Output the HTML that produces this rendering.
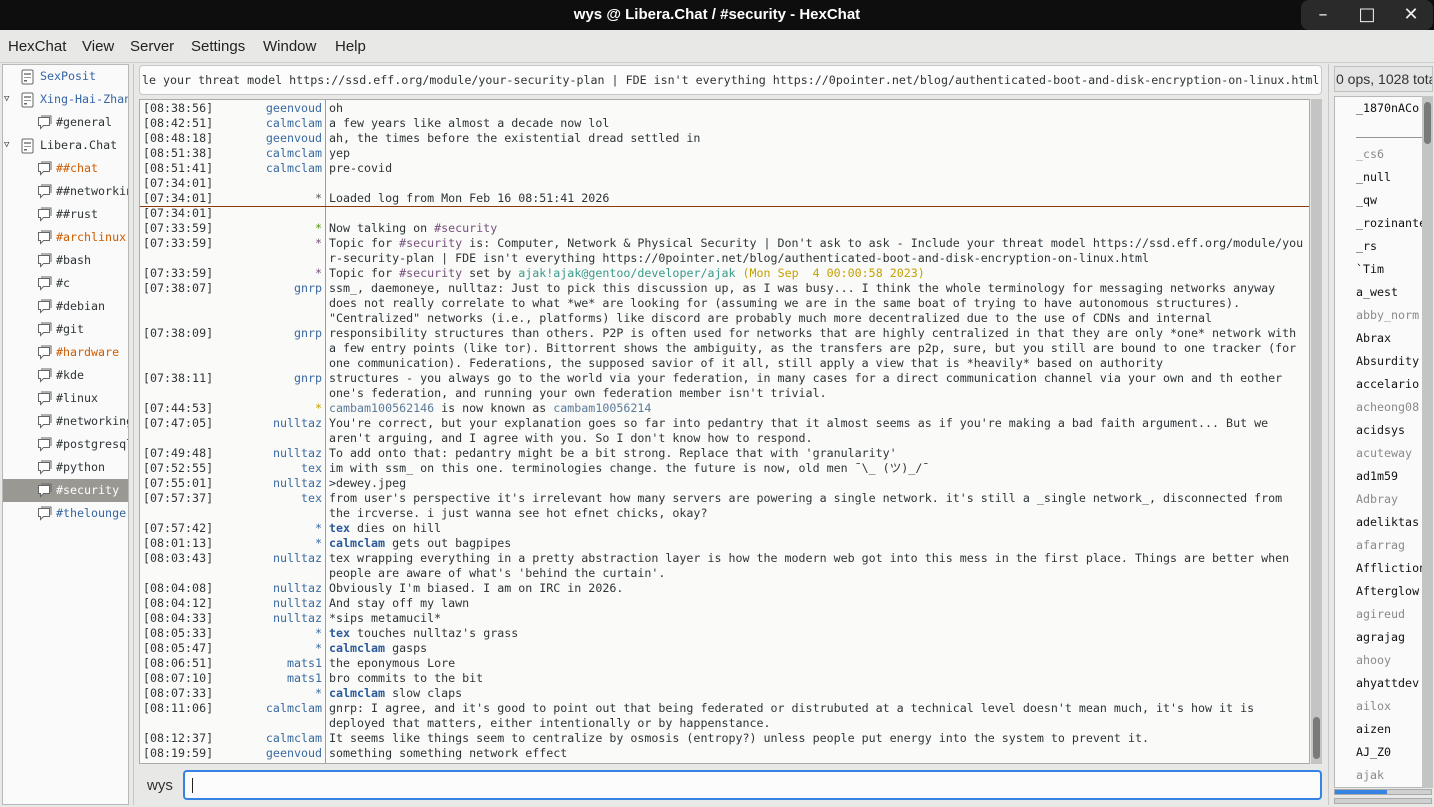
<!DOCTYPE html>
<html><head><meta charset="utf-8"><style>
*{box-sizing:border-box;margin:0;padding:0}
body{width:1434px;height:807px;overflow:hidden;background:#e8e8e7;position:relative;font-family:"DejaVu Sans Mono","Liberation Mono",monospace;font-size:11.65px;color:#2e3436}
.abs{position:absolute}
#title{left:0;top:0;width:1434px;height:30px;background:#0e0e0e;color:#fff;font:bold 15px "Liberation Sans",sans-serif;text-align:center;line-height:30px}
.wb{top:0;width:44px;height:30px;background:#2a2a2a;color:#eee;text-align:center;line-height:30px;font-family:"DejaVu Sans",sans-serif;font-size:18px}
#menu{left:0;top:30px;width:1434px;height:32px;font:15px "Liberation Sans",sans-serif;color:#222}
#menu span{position:absolute;top:8px}
#tree{left:2px;top:64px;width:127px;height:741px;background:#fafafa;border:1px solid #b8b8b8;overflow:hidden}
.ti{position:absolute;height:23px;line-height:23px;white-space:nowrap}
.ti svg{position:absolute;top:4px}
#topic{left:139px;top:65px;width:1183px;height:30px;background:#fcfcfc;border:1px solid #c8c8c8;border-radius:4px;overflow:hidden;white-space:nowrap;line-height:28px;padding-left:2px}
#chat{left:139px;top:99px;width:1171px;height:665px;background:#fafaf9;border:1px solid #aaa;overflow:hidden}
#sep{left:185px;top:0;width:1px;height:665px;background:#9a9aa8}
#marker{left:0;top:106px;width:1171px;height:1px;background:#8b3a0e}
.r{position:absolute;left:0;height:15px;line-height:15px;white-space:pre;width:1171px;margin-top:1px}
.t{position:absolute;left:3px}
.n{position:absolute;right:989px;color:#3a6aa0;text-align:right}
.m{position:absolute;left:189px}
.g{color:#4e9a06}.p{color:#75507b}.y{color:#c4a000}.c{color:#3a9a8a}.b{color:#2a5a9a;font-weight:bold}.s{color:#5a7a9a}
#vs{left:1311px;top:99px;width:11px;height:665px;background:#c4c4c4}
#nl{left:1334px;top:96px;width:89px;height:692px;background:#fafafa;border:1px solid #b8b8b8;overflow:hidden}
.nk{position:absolute;left:21px;height:23px;line-height:23px;white-space:nowrap;color:#111}
.aw{color:#8a8a8a}
</style></head><body>
<div id="title" class="abs">wys @ Libera.Chat / #security - HexChat</div>
<div class="abs wb" style="left:1301px;border-radius:8px 0 0 8px">&#x2013;</div>
<div class="abs wb" style="left:1345px">&#x25A1;</div>
<div class="abs wb" style="left:1389px;border-radius:0 8px 8px 0">&#x2715;</div>
<div id="menu" class="abs"><span style="left:8px">HexChat</span><span style="left:82px">View</span><span style="left:130px">Server</span><span style="left:191px">Settings</span><span style="left:263px">Window</span><span style="left:335px">Help</span></div>
<div class="abs" style="left:0;top:62px;width:1434px;height:1px;background:#d0d0d0"></div>
<div class="abs" style="left:133px;top:64px;width:1px;height:741px;background:#c8c8c8"></div>
<div class="abs" style="left:1328px;top:64px;width:1px;height:741px;background:#c8c8c8"></div>

<div id="tree" class="abs">
<svg width="0" height="0" style="position:absolute"><defs>
<g id="srv"><rect x="1" y="1" width="11" height="14" rx="1.5" fill="#fff" stroke="#666"/><rect x="3" y="4" width="7" height="2" fill="#999"/><rect x="3" y="8" width="7" height="1" fill="#999"/><rect x="3" y="11" width="3" height="1.5" fill="#666"/></g>
<g id="chn"><path d="M1.5 2.5h11v8h-6l-3 3v-3h-2z" fill="#fff" stroke="#666"/><path d="M4 1h10v8" fill="none" stroke="#666"/></g>
</defs></svg>
<div class="ti" style="left:18px;top:0"><svg width="14" height="16" style="left:0"><use href="#srv"/></svg><span style="position:absolute;left:19px;color:#3465a4">SexPosit</span></div>
<div class="ti" style="left:0;top:23px"><span style="position:absolute;left:1px;font-size:9px;top:0">&#x25BD;</span><svg width="14" height="16" style="left:18px"><use href="#srv"/></svg><span style="position:absolute;left:37px;color:#3465a4">Xing-Hai-Zhang</span></div>
<div class="ti" style="left:34px;top:46px"><svg width="16" height="16" style="left:0"><use href="#chn"/></svg><span style="position:absolute;left:19px">#general</span></div>
<div class="ti" style="left:0;top:69px"><span style="position:absolute;left:1px;font-size:9px">&#x25BD;</span><svg width="14" height="16" style="left:18px"><use href="#srv"/></svg><span style="position:absolute;left:37px">Libera.Chat</span></div>
<div class="ti" style="left:34px;top:92px"><svg width="16" height="16"><use href="#chn"/></svg><span style="position:absolute;left:19px;color:#ce5c00">##chat</span></div>
<div class="ti" style="left:34px;top:115px"><svg width="16" height="16"><use href="#chn"/></svg><span style="position:absolute;left:19px">##networking</span></div>
<div class="ti" style="left:34px;top:138px"><svg width="16" height="16"><use href="#chn"/></svg><span style="position:absolute;left:19px">##rust</span></div>
<div class="ti" style="left:34px;top:161px"><svg width="16" height="16"><use href="#chn"/></svg><span style="position:absolute;left:19px;color:#ce5c00">#archlinux</span></div>
<div class="ti" style="left:34px;top:184px"><svg width="16" height="16"><use href="#chn"/></svg><span style="position:absolute;left:19px">#bash</span></div>
<div class="ti" style="left:34px;top:207px"><svg width="16" height="16"><use href="#chn"/></svg><span style="position:absolute;left:19px">#c</span></div>
<div class="ti" style="left:34px;top:230px"><svg width="16" height="16"><use href="#chn"/></svg><span style="position:absolute;left:19px">#debian</span></div>
<div class="ti" style="left:34px;top:253px"><svg width="16" height="16"><use href="#chn"/></svg><span style="position:absolute;left:19px">#git</span></div>
<div class="ti" style="left:34px;top:276px"><svg width="16" height="16"><use href="#chn"/></svg><span style="position:absolute;left:19px;color:#ce5c00">#hardware</span></div>
<div class="ti" style="left:34px;top:299px"><svg width="16" height="16"><use href="#chn"/></svg><span style="position:absolute;left:19px">#kde</span></div>
<div class="ti" style="left:34px;top:322px"><svg width="16" height="16"><use href="#chn"/></svg><span style="position:absolute;left:19px">#linux</span></div>
<div class="ti" style="left:34px;top:345px"><svg width="16" height="16"><use href="#chn"/></svg><span style="position:absolute;left:19px">#networking</span></div>
<div class="ti" style="left:34px;top:368px"><svg width="16" height="16"><use href="#chn"/></svg><span style="position:absolute;left:19px">#postgresql</span></div>
<div class="ti" style="left:34px;top:391px"><svg width="16" height="16"><use href="#chn"/></svg><span style="position:absolute;left:19px">#python</span></div>
<div class="ti" style="left:0;top:414px;width:127px;background:#9a9893"></div>
<div class="ti" style="left:34px;top:414px"><svg width="16" height="16"><use href="#chn"/></svg><span style="position:absolute;left:19px;color:#fff">#security</span></div>
<div class="ti" style="left:34px;top:437px"><svg width="16" height="16"><use href="#chn"/></svg><span style="position:absolute;left:19px;color:#3465a4">#thelounge</span></div>
</div>

<div id="topic" class="abs">le your threat model https://ssd.eff.org/module/your-security-plan | FDE isn't everything https://0pointer.net/blog/authenticated-boot-and-disk-encryption-on-linux.html</div>

<div id="chat" class="abs">
<div id="sep" class="abs"></div>
<div id="marker" class="abs"></div>
<div class="r" style="top:0"><span class="t">[08:38:56]</span><span class="n">geenvoud</span><span class="m">oh</span></div>
<div class="r" style="top:15px"><span class="t">[08:42:51]</span><span class="n">calmclam</span><span class="m">a few years like almost a decade now lol</span></div>
<div class="r" style="top:30px"><span class="t">[08:48:18]</span><span class="n">geenvoud</span><span class="m">ah, the times before the existential dread settled in</span></div>
<div class="r" style="top:45px"><span class="t">[08:51:38]</span><span class="n">calmclam</span><span class="m">yep</span></div>
<div class="r" style="top:60px"><span class="t">[08:51:41]</span><span class="n">calmclam</span><span class="m">pre-covid</span></div>
<div class="r" style="top:75px"><span class="t">[07:34:01]</span></div>
<div class="r" style="top:90px"><span class="t">[07:34:01]</span><span class="n" style="color:#555">*</span><span class="m">Loaded log from Mon Feb 16 08:51:41 2026</span></div>
<div class="r" style="top:105px"><span class="t">[07:34:01]</span></div>
<div class="r" style="top:120px"><span class="t">[07:33:59]</span><span class="n g">*</span><span class="m">Now talking on <span class="p">#security</span></span></div>
<div class="r" style="top:135px"><span class="t">[07:33:59]</span><span class="n" style="color:#75507b">*</span><span class="m">Topic for <span class="p">#security</span> is: Computer, Network &amp; Physical Security | Don't ask to ask - Include your threat model https://ssd.eff.org/module/you</span></div>
<div class="r" style="top:150px"><span class="m">r-security-plan | FDE isn't everything https://0pointer.net/blog/authenticated-boot-and-disk-encryption-on-linux.html</span></div>
<div class="r" style="top:165px"><span class="t">[07:33:59]</span><span class="n" style="color:#75507b">*</span><span class="m">Topic for <span class="p">#security</span> set by <span class="c">ajak!ajak@gentoo/developer/ajak</span> <span class="y">(Mon Sep  4 00:00:58 2023)</span></span></div>
<div class="r" style="top:180px"><span class="t">[07:38:07]</span><span class="n">gnrp</span><span class="m">ssm_, daemoneye, nulltaz: Just to pick this discussion up, as I was busy... I think the whole terminology for messaging networks anyway</span></div>
<div class="r" style="top:195px"><span class="m">does not really correlate to what *we* are looking for (assuming we are in the same boat of trying to have autonomous structures).</span></div>
<div class="r" style="top:210px"><span class="m">"Centralized" networks (i.e., platforms) like discord are probably much more decentralized due to the use of CDNs and internal</span></div>
<div class="r" style="top:225px"><span class="t">[07:38:09]</span><span class="n">gnrp</span><span class="m">responsibility structures than others. P2P is often used for networks that are highly centralized in that they are only *one* network with</span></div>
<div class="r" style="top:240px"><span class="m">a few entry points (like tor). Bittorrent shows the ambiguity, as the transfers are p2p, sure, but you still are bound to one tracker (for</span></div>
<div class="r" style="top:255px"><span class="m">one communication). Federations, the supposed savior of it all, still apply a view that is *heavily* based on authority</span></div>
<div class="r" style="top:270px"><span class="t">[07:38:11]</span><span class="n">gnrp</span><span class="m">structures - you always go to the world via your federation, in many cases for a direct communication channel via your own and th eother</span></div>
<div class="r" style="top:285px"><span class="m">one's federation, and running your own federation member isn't trivial.</span></div>
<div class="r" style="top:300px"><span class="t">[07:44:53]</span><span class="n y">*</span><span class="m"><span class="s">cambam100562146</span> is now known as <span class="s">cambam10056214</span></span></div>
<div class="r" style="top:315px"><span class="t">[07:47:05]</span><span class="n">nulltaz</span><span class="m">You're correct, but your explanation goes so far into pedantry that it almost seems as if you're making a bad faith argument... But we</span></div>
<div class="r" style="top:330px"><span class="m">aren't arguing, and I agree with you. So I don't know how to respond.</span></div>
<div class="r" style="top:345px"><span class="t">[07:49:48]</span><span class="n">nulltaz</span><span class="m">To add onto that: pedantry might be a bit strong. Replace that with 'granularity'</span></div>
<div class="r" style="top:360px"><span class="t">[07:52:55]</span><span class="n">tex</span><span class="m">im with ssm_ on this one. terminologies change. the future is now, old men ¯\_ (ツ)_/¯</span></div>
<div class="r" style="top:375px"><span class="t">[07:55:01]</span><span class="n">nulltaz</span><span class="m">&gt;dewey.jpeg</span></div>
<div class="r" style="top:390px"><span class="t">[07:57:37]</span><span class="n">tex</span><span class="m">from user's perspective it's irrelevant how many servers are powering a single network. it's still a _single network_, disconnected from</span></div>
<div class="r" style="top:405px"><span class="m">the ircverse. i just wanna see hot efnet chicks, okay?</span></div>
<div class="r" style="top:420px"><span class="t">[07:57:42]</span><span class="n">*</span><span class="m"><span class="b">tex</span> dies on hill</span></div>
<div class="r" style="top:435px"><span class="t">[08:01:13]</span><span class="n">*</span><span class="m"><span class="b">calmclam</span> gets out bagpipes</span></div>
<div class="r" style="top:450px"><span class="t">[08:03:43]</span><span class="n">nulltaz</span><span class="m">tex wrapping everything in a pretty abstraction layer is how the modern web got into this mess in the first place. Things are better when</span></div>
<div class="r" style="top:465px"><span class="m">people are aware of what's 'behind the curtain'.</span></div>
<div class="r" style="top:480px"><span class="t">[08:04:08]</span><span class="n">nulltaz</span><span class="m">Obviously I'm biased. I am on IRC in 2026.</span></div>
<div class="r" style="top:495px"><span class="t">[08:04:12]</span><span class="n">nulltaz</span><span class="m">And stay off my lawn</span></div>
<div class="r" style="top:510px"><span class="t">[08:04:33]</span><span class="n">nulltaz</span><span class="m">*sips metamucil*</span></div>
<div class="r" style="top:525px"><span class="t">[08:05:33]</span><span class="n">*</span><span class="m"><span class="b">tex</span> touches nulltaz's grass</span></div>
<div class="r" style="top:540px"><span class="t">[08:05:47]</span><span class="n">*</span><span class="m"><span class="b">calmclam</span> gasps</span></div>
<div class="r" style="top:555px"><span class="t">[08:06:51]</span><span class="n">mats1</span><span class="m">the eponymous Lore</span></div>
<div class="r" style="top:570px"><span class="t">[08:07:10]</span><span class="n">mats1</span><span class="m">bro commits to the bit</span></div>
<div class="r" style="top:585px"><span class="t">[08:07:33]</span><span class="n">*</span><span class="m"><span class="b">calmclam</span> slow claps</span></div>
<div class="r" style="top:600px"><span class="t">[08:11:06]</span><span class="n">calmclam</span><span class="m">gnrp: I agree, and it's good to point out that being federated or distrubuted at a technical level doesn't mean much, it's how it is</span></div>
<div class="r" style="top:615px"><span class="m">deployed that matters, either intentionally or by happenstance.</span></div>
<div class="r" style="top:630px"><span class="t">[08:12:37]</span><span class="n">calmclam</span><span class="m">It seems like things seem to centralize by osmosis (entropy?) unless people put energy into the system to prevent it.</span></div>
<div class="r" style="top:645px"><span class="t">[08:19:59]</span><span class="n">geenvoud</span><span class="m">something something network effect</span></div>
</div>
<div id="vs" class="abs"><div class="abs" style="left:2px;top:618px;width:7px;height:42px;border-radius:4px;background:#7a7a7a"></div></div>

<div class="abs" style="left:147px;top:777px;font:15px 'Liberation Sans',sans-serif;color:#333">wys</div>
<div class="abs" style="left:183px;top:770px;width:1139px;height:30px;border:2px solid #3584e4;border-radius:4px;background:#fcfcfc"><div class="abs" style="left:7px;top:6px;width:1px;height:15px;background:#222"></div></div>

<div class="abs" style="left:1334px;top:66px;width:99px;height:26px;border:1px solid #c0c0c0;background:#e4e4e4;font:14px 'Liberation Sans',sans-serif;line-height:24px;white-space:nowrap;overflow:hidden;padding-left:1px;color:#333">0 ops, 1028 total</div>
<div id="nl" class="abs">
<div class="nk" style="top:0">_1870nACo</div>
<div class="nk" style="top:23px">__________</div>
<div class="nk aw" style="top:46px">_cs6</div>
<div class="nk" style="top:69px">_null</div>
<div class="nk" style="top:92px">_qw</div>
<div class="nk" style="top:115px">_rozinante</div>
<div class="nk" style="top:138px">_rs</div>
<div class="nk" style="top:161px">`Tim</div>
<div class="nk" style="top:184px">a_west</div>
<div class="nk aw" style="top:207px">abby_norm</div>
<div class="nk" style="top:230px">Abrax</div>
<div class="nk" style="top:253px">Absurdity</div>
<div class="nk" style="top:276px">accelario</div>
<div class="nk aw" style="top:299px">acheong08</div>
<div class="nk" style="top:322px">acidsys</div>
<div class="nk aw" style="top:345px">acuteway</div>
<div class="nk" style="top:368px">ad1m59</div>
<div class="nk aw" style="top:391px">Adbray</div>
<div class="nk" style="top:414px">adeliktas</div>
<div class="nk aw" style="top:437px">afarrag</div>
<div class="nk" style="top:460px">Affliction</div>
<div class="nk" style="top:483px">Afterglow</div>
<div class="nk aw" style="top:506px">agireud</div>
<div class="nk" style="top:529px">agrajag</div>
<div class="nk aw" style="top:552px">ahooy</div>
<div class="nk" style="top:575px">ahyattdev</div>
<div class="nk aw" style="top:598px">ailox</div>
<div class="nk" style="top:621px">aizen</div>
<div class="nk" style="top:644px">AJ_Z0</div>
<div class="nk aw" style="top:667px">ajak</div>
</div>
<div class="abs" style="left:1422px;top:96px;width:11px;height:692px;background:#c4c4c4"><div class="abs" style="left:2px;top:6px;width:7px;height:42px;border-radius:4px;background:#7a7a7a"></div></div>
<div class="abs" style="left:1334px;top:789px;width:98px;height:6px;background:#d0d0d0;border:1px solid #aaa"><div style="width:52px;height:4px;background:#3584e4"></div></div>
<div class="abs" style="left:1334px;top:798px;width:98px;height:6px;background:#d0d0d0;border:1px solid #aaa"></div>
</body></html>
